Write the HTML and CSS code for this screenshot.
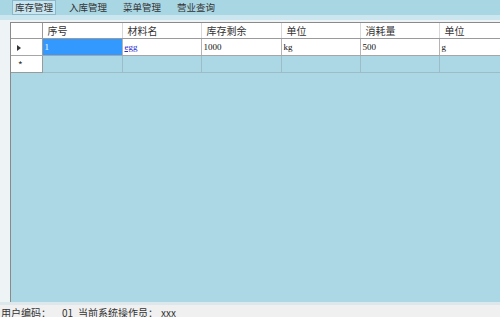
FILE: index.html
```html
<!DOCTYPE html>
<html lang="zh">
<head>
    <meta charset="UTF-8">
    <title>库存管理</title>
    <link rel="stylesheet" href="styles.css">
</head>
<body>
    <div class="menubar">
        <span class="menu-item active">库存管理</span>
        <span class="menu-item">入库管理</span>
        <span class="menu-item">菜单管理</span>
        <span class="menu-item">营业查询</span>
    </div>
    <div class="menu-edge"></div>
    <div class="main">
        <div class="grid">
            <table class="data-grid">
                <colgroup>
                    <col class="col-head">
                    <col class="col-a">
                    <col class="col-b">
                    <col class="col-a">
                    <col class="col-b">
                    <col class="col-b">
                    <col class="col-a">
                </colgroup>
                <thead>
                    <tr>
                        <th class="row-head"></th>
                        <th>序号</th>
                        <th>材料名</th>
                        <th>库存剩余</th>
                        <th>单位</th>
                        <th>消耗量</th>
                        <th>单位</th>
                    </tr>
                </thead>
                <tbody>
                    <tr class="data-row">
                        <td class="row-head"><span class="arrow"></span></td>
                        <td class="selected">1</td>
                        <td><a href="#" class="link">egg</a></td>
                        <td>1000</td>
                        <td>kg</td>
                        <td>500</td>
                        <td>g</td>
                    </tr>
                    <tr class="new-row">
                        <td class="row-head"><span class="star">*</span></td>
                        <td></td>
                        <td></td>
                        <td></td>
                        <td></td>
                        <td></td>
                        <td></td>
                    </tr>
                </tbody>
            </table>
        </div>
    </div>
    <div class="status-edge"></div>
    <div class="statusbar">
        <span class="status-label">用户编码：</span>
        <span class="status-code">01</span>
        <span class="status-label">当前系统操作员：</span>
        <span class="status-user">xxx</span>
    </div>
</body>
</html>
```

FILE: styles.css
```css
body {
    margin: 0;
    padding: 0;
    width: 500px;
    height: 317px;
    overflow: hidden;
    background-color: #f0f0f0;
    font-family: "Noto Sans CJK SC", "Liberation Sans", sans-serif;
    font-size: 11px;
    color: #222;
}

.menubar {
    height: 15px;
    background-color: #a9d6e3;
    display: flex;
    align-items: center;
    gap: 10px;
    padding-left: 12px;
}

.menu-item {
    height: 15px;
    line-height: 13px;
    padding: 0 2px;
    box-sizing: border-box;
    border: 1px solid transparent;
    color: #333;
    font-size: 9.5px;
}

.menu-item.active {
    background-color: #c8e6f1;
    border: 1px solid #8cb8cc;
}

.menu-edge {
    height: 5px;
    background-color: #cbe6ee;
}

.main {
    background-color: #eef3f5;
    padding: 2px 0 0 10px;
}

.grid {
    height: 279px;
    background-color: #acd8e5;
    border-top: 1px solid #8a8a8a;
    border-left: 1px solid #8a8a8a;
    overflow: hidden;
}

.data-grid {
    border-collapse: collapse;
    table-layout: fixed;
    width: 506px;
}

.col-head {
    width: 31px;
}

.col-a {
    width: 80px;
}

.col-b {
    width: 79px;
}

.data-grid th,
.data-grid td {
    height: 16px;
    padding: 0 0 0 2px;
    text-align: left;
    white-space: nowrap;
    overflow: hidden;
}

.data-grid th {
    height: 15px;
    background-color: #fff;
    font-weight: normal;
    font-size: 10px;
    border-right: 1px solid #d8d8d8;
    border-bottom: 1px solid #9a9a9a;
    padding-left: 5px;
    color: #333;
}

.data-grid th.row-head,
.data-grid td.row-head {
    background-color: #fff;
    border-right: 1px solid #9a9a9a;
    padding-left: 6px;
}

.data-row td {
    height: 16px;
    background-color: #fff;
    border-right: 1px solid #b4b4b4;
    border-bottom: 1px solid #a6a6a6;
    font-family: "Liberation Serif", serif;
    font-size: 9px;
    color: #111;
}

.data-row td.selected {
    background-color: #3399ff;
    color: #fff;
}

.new-row td {
    height: 16px;
    border-right: 1px solid #9cbcc8;
    border-bottom: 1px solid #9cbcc8;
}

.new-row td.row-head {
    border-right: 1px solid #9a9a9a;
    border-bottom: 1px solid #9a9a9a;
}

.link {
    color: #2a2ad0;
    text-decoration: underline;
    font-size: 9px;
}

.arrow {
    display: inline-block;
    width: 0;
    height: 0;
    border-top: 3px solid transparent;
    border-bottom: 3px solid transparent;
    border-left: 4px solid #333;
    vertical-align: middle;
}

.star {
    font-size: 10px;
    color: #333;
    padding-left: 1px;
}

.status-edge {
    height: 3px;
    background-color: #dde8ec;
}

.statusbar {
    height: 12px;
    display: flex;
    align-items: flex-start;
    padding: 1px 0 0 1px;
    font-size: 10px;
    line-height: 13px;
    color: #333;
    background-color: #f0f0f0;
}

.status-code {
    margin: 0 5px 0 11px;
}

.status-user {
    margin-left: 3px;
}
```
